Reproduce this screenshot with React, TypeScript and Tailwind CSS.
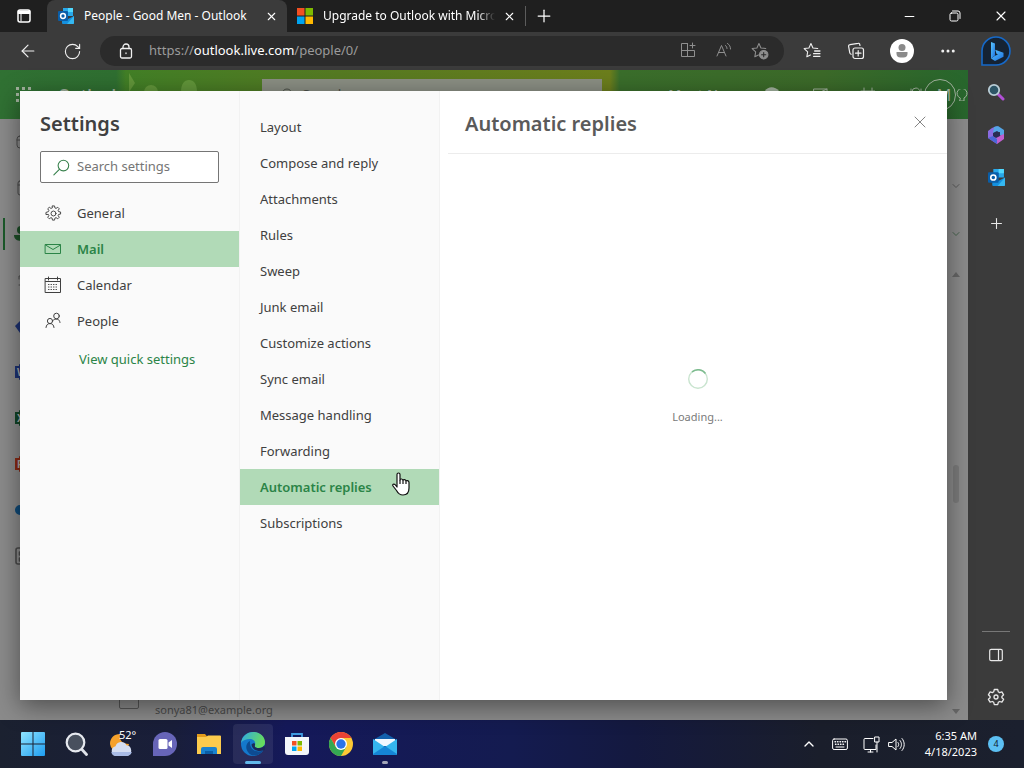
import React from 'react';
import { Plus, Minus, X, ChevronUp, ChevronDown, ArrowLeft, RotateCw, Ellipsis } from 'lucide-react';

const NAV_ITEMS = [
  { name: 'General', icon: 'gear' },
  { name: 'Mail', icon: 'mail' },
  { name: 'Calendar', icon: 'calendar' },
  { name: 'People', icon: 'people' },
];

const MAIL_SECTIONS = [
  'Layout',
  'Compose and reply',
  'Attachments',
  'Rules',
  'Sweep',
  'Junk email',
  'Customize actions',
  'Sync email',
  'Message handling',
  'Forwarding',
  'Automatic replies',
  'Subscriptions',
];

type IconProps = { size?: number; className?: string; box?: number; children?: React.ReactNode };

const Line = ({ size = 16, box = 16, className = '', children }: IconProps) => (
  <svg width={size} height={size} viewBox={`0 0 ${box} ${box}`} fill="none" stroke="currentColor" strokeWidth="1" strokeLinecap="round" strokeLinejoin="round" className={className} aria-hidden="true">
    {children}
  </svg>
);

const OutlookLogo = ({ size = 16 }: IconProps) => (
  <svg width={size} height={size} viewBox="0 0 16 16" aria-hidden="true">
    <path d="M5 0h10v8H5z" fill="#28a8ea" />
    <path d="M10 0h5v4h-5z" fill="#50d9ff" />
    <path d="M5 4h5v4H5z" fill="#0f78d4" />
    <path d="M4 8l6 3 6-3v7a1 1 0 0 1-1 1H5a1 1 0 0 1-1-1z" fill="#1490df" />
    <path d="M16 8v7a1 1 0 0 1-1 1H9z" fill="#35b8f1" />
    <rect x="0" y="3" width="10" height="10" rx="1" fill="#0a5ea8" />
    <circle cx="5" cy="8" r="2.4" fill="none" stroke="#fff" strokeWidth="1.5" />
  </svg>
);

const MicrosoftLogo = () => (
  <svg width="16" height="16" viewBox="0 0 16 16" aria-hidden="true">
    <path d="M0 0h7.5v7.5H0z" fill="#f25022" />
    <path d="M8.5 0H16v7.5H8.5z" fill="#7fba00" />
    <path d="M0 8.5h7.5V16H0z" fill="#00a4ef" />
    <path d="M8.5 8.5H16V16H8.5z" fill="#ffb900" />
  </svg>
);

const BingLogo = () => (
  <svg width="32" height="32" viewBox="0 0 32 32" aria-hidden="true">
    <defs>
      <linearGradient id="bing" x1="0" y1="0" x2="1" y2="1">
        <stop offset="0" stopColor="#5cc8ff" />
        <stop offset="1" stopColor="#1b6fe0" />
      </linearGradient>
    </defs>
    <path d="M2 30V16A14 14 0 1 1 16 30z" fill="#152334" stroke="#1669c9" strokeWidth="1.6" />
    <path d="M11 7l4 1.6v11.8l-4 3.2z" fill="url(#bing)" />
    <path d="M11 23.6l4-2.8 3-1.3-1.5-.8-1.3-4 8.3 3v4L15 26z" fill="url(#bing)" />
  </svg>
);

const GearIcon = ({ size = 18 }: IconProps) => (
  <Line size={size} box={18}>
    <circle cx="9" cy="9" r="2.6" />
    <path d="M7.9 1h2.2l.4 2.1 1.2.5 1.8-1.2 1.6 1.6-1.2 1.8.5 1.2 2.1.4v2.2l-2.1.4-.5 1.2 1.2 1.8-1.6 1.6-1.8-1.2-1.2.5-.4 2.1H7.9l-.4-2.1-1.2-.5-1.8 1.2-1.6-1.6 1.2-1.8-.5-1.2L1 10.100V7.900l2.600-.9.500-1.200L2.900 4 4.500 2.400l1.800 1.200 1.200-.5z" />
  </Line>
);

const SidebarGear = () => (
  <Line size={18} box={18}>
    <g strokeWidth="1.3">
      <circle cx="9" cy="9" r="2" />
      <path d="M7.300 1.500h3.400l.6 2.300 1.300.8 2.300-.7 1.700 2.900-1.700 1.700v1.200l1.700 1.600-1.700 2.900-2.300-.7-1.300.8-.6 2.300H7.300l-.6-2.300-1.300-.8-2.300.7-1.700-2.900 1.700-1.600V8.500L1.400 6.800l1.700-2.900 2.300.7 1.300-.8z" />
    </g>
  </Line>
);

const NavIcon = ({ icon }: { icon: string }) => {
  if (icon === 'gear') return <GearIcon size={17} />;
  if (icon === 'mail') {
    return (
      <Line size={18} box={18}>
        <path d="M1.500 4.500h15v9h-15zM1.500 5l7.500 4.500L16.500 5" />
      </Line>
    );
  }
  if (icon === 'calendar') {
    return (
      <Line size={18} box={18}>
        <path d="M1.500 2.500h15v14h-15zM1.500 5.500h15M4.500 1v3M13.500 1v3" />
        <path d="M4.500 8.500h9M4.500 11h9M4.500 13.500h9" strokeDasharray="0.5 2" />
      </Line>
    );
  }
  return (
    <Line size={18} box={18}>
      <circle cx="12.500" cy="4" r="2.800" />
      <circle cx="6" cy="9" r="2.600" />
      <path d="M2 15.500c.3-2.600 1.600-3.900 4-3.900s3.700 1.300 4 3.900M9.500 8c3.500-2 6-.8 6.500 2.500" />
    </Line>
  );
};

const Tab = ({ title, active, icon }: { title: string; active?: boolean; icon: React.ReactNode }) => (
  <div className={`flex min-w-0 items-center pr-2 ${active ? 'w-60 rounded-t-lg bg-[#3b3b3b] pl-[11px]' : 'w-[238px] pl-2.5'}`}>
    <span className="shrink-0">{icon}</span>
    <button className={`ml-2.5 min-w-0 flex-1 overflow-hidden whitespace-nowrap text-left text-[12px] text-white ${active ? '' : '[mask-image:linear-gradient(to_right,black_90%,transparent)]'}`}>
      {title}
    </button>
    <button aria-label="Close tab" className="ml-1.5 flex h-4 w-4 shrink-0 items-center justify-center text-white">
      <X size={13} strokeWidth={2} />
    </button>
  </div>
);

const TabBar = () => (
  <header className="flex h-8 shrink-0 bg-[#1f1f1f] text-white">
    <button aria-label="Tab actions" className="flex w-[47px] items-center justify-center">
      <Line size={14} box={14}>
        <rect x="1" y="1" width="12" height="12" rx="2" strokeWidth="1.5" />
        <path d="M1.500 2.500h11M1.500 4h11" strokeWidth="1.800" />
        <path d="M4 5v7" />
      </Line>
    </button>
    <Tab title="People - Good Men - Outlook" active icon={<OutlookLogo />} />
    <Tab title="Upgrade to Outlook with Microsoft 365" icon={<MicrosoftLogo />} />
    <div className="my-1.5 w-px bg-[#5c5c5c]" />
    <button aria-label="New tab" className="flex w-9 items-center justify-center">
      <Plus size={20} strokeWidth={1.5} />
    </button>
    <div className="ml-auto flex">
      <button aria-label="Minimize" className="flex w-[46px] items-center justify-center"><Minus size={15} strokeWidth={1.6} /></button>
      <button aria-label="Restore" className="flex w-[46px] items-center justify-center">
        <Line size={12} box={12}>
          <rect x="1" y="3" width="8" height="8" rx="1.500" />
          <path d="M3.500 1H9a2 2 0 0 1 2 2v5.500" />
        </Line>
      </button>
      <button aria-label="Close" className="flex w-[46px] items-center justify-center"><X size={16} strokeWidth={1.7} /></button>
    </div>
  </header>
);

const Star = () => <path d="M7.500 1.500l1.900 4.100 4.500.6M7.500 1.500L5.600 5.600l-4.500.6 3.300 3.200-.8 4.600L7 12.200" />;

const Toolbar = () => (
  <div className="flex h-[38px] shrink-0 items-center bg-[#3b3b3b] pl-1.5 pr-0.5 text-[#f0f0f0]">
    <button aria-label="Back" className="flex w-11 justify-center"><ArrowLeft size={20} strokeWidth={1.400} /></button>
    <button aria-label="Reload" className="flex w-11 justify-center"><RotateCw size={19} strokeWidth={1.400} /></button>
    <div className="ml-1.5 flex h-[30px] min-w-0 flex-1 items-center rounded-full bg-[#2b2b2b] pl-[18px] pr-1.5">
      <Line size={16} box={16}>
        <g strokeWidth="1.300">
          <rect x="2.500" y="5.500" width="11" height="9.500" rx="1.500" />
          <path d="M5 5.500V4a3 3 0 0 1 6 0v1.500M8 10v.5" />
        </g>
      </Line>
      <div role="textbox" aria-label="Address" tabIndex={0} className="ml-[15px] flex-1 whitespace-nowrap text-[13px] text-[#9b9b9b]">
        https://<span className="text-white">outlook.live.com</span>/people/0/
      </div>
      <div className="flex text-[#8f8f8f]">
        <button aria-label="Apps" className="flex w-9 justify-center">
          <Line size={16} box={16}><path d="M7.500 1.500h-6v13h13v-6h-13M7.500 1.500v13M8 8.500h3M12.500 1v5M10 3.500h5" /></Line>
        </button>
        <button aria-label="Read aloud" className="flex w-9 justify-center">
          <Line size={16} box={16}><path d="M1 14L5.500 3.500 10 14M2.700 10.500h5.600M9.500 3.500c1 .8 1.500 2 1.500 3M11.500 1.500c2 1.300 3 3 3 5.500" /></Line>
        </button>
        <button aria-label="Add to favorites" className="flex w-9 justify-center">
          <Line size={18} box={17}>
            <Star />
            <circle cx="12" cy="12" r="4" fill="currentColor" />
            <path d="M12 10v4M10 12h4" stroke="#2b2b2b" />
          </Line>
        </button>
      </div>
    </div>
    <button aria-label="Favorites" className="ml-1.5 flex w-11 justify-center">
      <Line size={18} box={17}><Star /><path d="M11 8.500h5M10 11h6M10 13.500h6" strokeWidth="1.200" /></Line>
    </button>
    <button aria-label="Collections" className="flex w-11 justify-center">
      <Line size={18} box={18}>
        <g strokeWidth="1.200">
          <rect x="6" y="6" width="10.500" height="10.500" rx="2" />
          <path d="M11.200 8.500v5.500M8.500 11.200H14M13 3.500l-.3-1.200a1.500 1.500 0 0 0-1.700-1L3 2.600A1.500 1.500 0 0 0 1.600 4.300l1.200 6.500c.2.700.7 1.200 1.300 1.500" />
        </g>
      </Line>
    </button>
    <button aria-label="Profile" className="flex w-12 justify-center">
      <svg width="24" height="24" viewBox="0 0 24 24" aria-hidden="true">
        <circle cx="12" cy="12" r="12" fill="#fff" />
        <circle cx="12" cy="8.500" r="3.500" fill="#8a8a8a" />
        <path d="M6.500 13h11v1.500a4 4 0 0 1-4 4h-3a4 4 0 0 1-4-4z" fill="#8a8a8a" />
      </svg>
    </button>
    <button aria-label="More" className="flex w-11 justify-center"><Ellipsis size={18} /></button>
    <button aria-label="Bing" className="flex w-[52px] justify-center"><BingLogo /></button>
  </div>
);

const AppBadge = ({ color, letter }: { color: string; letter: string }) => (
  <svg width="18" height="18" viewBox="0 0 18 18" aria-hidden="true">
    <rect x="4" y="1" width="14" height="16" rx="1" fill={color} />
    <rect x="0" y="3" width="12" height="12" fill={color} />
    <text x="2" y="13" fontSize="10" fontWeight="700" fill="#aaa">{letter}</text>
  </svg>
);

const RAIL = [
  <Line key="mail" size={18} box={18}><rect x="2" y="3" width="15" height="12" rx="3" /><path d="M2 7h15" /></Line>,
  <Line key="cal" size={18} box={18}><rect x="3" y="2" width="14" height="14" rx="2" /><path d="M3 6h14" /></Line>,
  <svg key="people" width="20" height="18" viewBox="0 0 20 18" fill="#1c4f27"><circle cx="7" cy="5" r="4" /><path d="M0 10h18c0 5-4 6-9 6s-9-1-9-6z" /></svg>,
  <Line key="files" size={14} box={14}><path d="M4 6V3h10v9H4" /></Line>,
  <svg key="todo" width="20" height="16" viewBox="0 0 20 16" fill="#1d3273"><path d="M0 8l5-5 15 8-6 5-9-1z" /></svg>,
  <AppBadge key="word" color="#1d3273" letter="W" />,
  <AppBadge key="excel" color="#124527" letter="X" />,
  <AppBadge key="ppt" color="#8a2a14" letter="P" />,
  <svg key="drive" width="20" height="14" viewBox="0 0 20 14" fill="#0f4a78"><path d="M5 12a5 5 0 0 1 0-10c6-3 10 0 13 5v5z" /></svg>,
  <Line key="apps" size={18} box={18}><g strokeWidth="1.600"><rect x="1" y="1" width="16" height="16" rx="2" /><path d="M4.500 5v3M4.500 11v3" /></g></Line>,
];

const OutlookPage = () => (
  <div className="flex h-full flex-col" aria-hidden="true">
    <div className="flex h-[49px] shrink-0 items-center justify-between bg-[linear-gradient(to_right,#307133_0,#2f6f31_12%,#427f26_13%,#557a22_35%,#6c7e1c_63%,#3a6e2b_64%,#3c6a29_85%,#28672d_100%)] pl-4 text-[#a3b39f]">
      <svg width="16" height="16" viewBox="0 0 16 16" fill="currentColor">
        <path d="M0 0h3v3H0zM6 0h3v3H6zM12 0h3v3h-3zM0 6h3v3H0zM0 12h3v3H0z" />
      </svg>
      <span className="ml-[26px] text-[16px] font-semibold">Outlook</span>
      <svg width="100" height="49" viewBox="0 0 100 49" fill="#62963a" className="mr-auto ml-2">
        <path d="M0 3l6 10-6 9z" />
        <circle cx="22" cy="22" r="7" />
        <path d="M52 22c0-8 3-12 8-12s8 4 8 12z" />
      </svg>
      <div className="flex h-8 w-[340px] shrink-0 items-center gap-2 bg-[#8b8f84] px-4 text-[14px] text-[#4b5048]">
        <Line><circle cx="9" cy="7" r="5" /><path d="M5.500 10.500L1 15" /></Line>
        Search
      </div>
      <span className="ml-[66px] whitespace-nowrap text-[14px] font-semibold">Meet Now</span>
      <div className="ml-[26px] flex w-40 items-center justify-between">
        <svg width="16" height="16" viewBox="0 0 16 16" fill="currentColor"><path d="M1 4c3-5 10-5 14 0v4H1z" /></svg>
        <Line><path d="M2 2h13v12H2zM2 8l13-6" /></Line>
        <Line><path d="M1 4h14v11H1zM4 1v4M12 1v4" /></Line>
        <Line><circle cx="8" cy="5" r="4" /><path d="M3 2v5M13 2v5" /></Line>
      </div>
      <span className="flex h-8 w-8 shrink-0 items-center justify-center rounded-full border border-current pl-2 text-[16px]">M</span>
      <Line size={12} box={12}><path d="M4 9a5 5 0 1 1 4 0v3H4z" /></Line>
    </div>
    <div className="flex min-h-0 flex-1 bg-[#8b8b8b] text-[#4a4a4a]">
      <div className="w-12 shrink-0">
        {RAIL.map((item, i) => (
          <div key={i} className={`flex h-[46px] items-center ${i === 2 ? 'pl-[11px]' : 'pl-[15px]'}`}>
            {i === 2 && <span className="-ml-2 mr-[9px] h-8 w-0.5 bg-[#1c5a2a]" />}
            {item}
          </div>
        ))}
      </div>
      <div className="flex flex-1 items-end gap-4 pl-[71px]">
        <span className="mb-[11px] h-5 w-5 rounded-xs border border-[#555]" />
        <span className="pb-0.5 text-[11px] leading-4">sonya81@example.org</span>
      </div>
      <div className="flex w-6 flex-col items-center pt-[61px]">
        <ChevronDown size={12} strokeWidth={1.500} />
        <ChevronDown size={12} strokeWidth={1.500} className="mt-9 text-[#32563a]" />
        <svg width="8" height="5" viewBox="0 0 8 5" className="mt-8" fill="#666"><path d="M4 0l4 5H0z" /></svg>
        <span className="mt-auto h-[38px] w-1.5 rounded-full bg-[#7b7b7b]" />
        <svg width="8" height="5" viewBox="0 0 8 5" className="mb-1.5 mt-[206px]" fill="#666"><path d="M4 5l4-5H0z" /></svg>
      </div>
    </div>
  </div>
);

const HandCursor = () => (
  <svg width="18" height="24" viewBox="0 0 18 24" className="absolute left-[152px] top-[3px]" aria-hidden="true">
    <path d="M5 15V2.500a1.500 1.500 0 0 1 3 0V8c0-1.500 3-1.300 3 .5 0-1.300 3-1.200 3 .8 0-1.200 3-.9 3 1.200V16c0 4-2 7-6 7-3.500 0-5-1.600-6.500-4.500L1 14c-.8-1.500.8-2.600 2-1.500z" fill="#fff" stroke="#111" strokeWidth="1.200" strokeLinejoin="round" />
    <path d="M8 8v4M11 8.500V12M14 9.500V12" stroke="#111" strokeWidth="1.200" />
  </svg>
);

const SettingsDialog = () => (
  <div role="dialog" aria-label="Settings" className="flex h-full bg-white text-[13px] text-[#404040] shadow-[0_6px_24px_rgba(0,0,0,0.45)]">
    <nav className="flex w-[220px] shrink-0 flex-col border-r border-[#f2f2f2] bg-[#fafafa]">
      <h1 className="px-5 pt-[19px] text-[20px] font-semibold leading-7">Settings</h1>
      <div className="mx-5 mt-[13px] flex h-8 items-center rounded-xs border border-[#757575] bg-white pl-3">
        <label htmlFor="search" aria-label="Search settings" className="text-[#36804b]">
          <Line size={17} box={16}><circle cx="9.800" cy="6.200" r="5" /><path d="M6 9.800L.8 15" /></Line>
        </label>
        <input id="search" type="text" placeholder="Search settings" className="ml-[7px] w-32 bg-transparent outline-none placeholder:text-[#757575]" />
      </div>
      <ul className="mt-3">
        {NAV_ITEMS.map((item) => (
          <li key={item.name}>
            <button className={`flex h-9 w-full items-center gap-[15px] pl-6 text-left ${item.name === 'Mail' ? 'bg-[#b1dab7] font-semibold text-[#2b8447]' : ''}`}>
              <span className="flex w-[18px] justify-center"><NavIcon icon={item.icon} /></span>
              <span className="pt-0.5">{item.name}</span>
            </button>
          </li>
        ))}
      </ul>
      <a href="#quick" className="ml-[59px] mt-[11px] text-[#2b8447]">View quick settings</a>
    </nav>

    <ul className="w-[200px] shrink-0 border-r border-[#f2f2f2] bg-[#fafafa] pt-[18px]">
      {MAIL_SECTIONS.map((name) => (
        <li key={name} className="relative">
          <button className={`h-9 w-full pl-5 pt-0.5 text-left ${name === 'Automatic replies' ? 'bg-[#b1dab7] font-semibold text-[#2b8447]' : ''}`}>
            {name}
          </button>
          {name === 'Automatic replies' && <HandCursor />}
        </li>
      ))}
    </ul>

    <section className="ml-2 flex min-w-0 flex-1 flex-col">
      <div className="flex h-[63px] items-center justify-between border-b border-[#ececec] pl-[17px] pr-[17px]">
        <h2 className="pt-[3px] text-[20px] font-semibold leading-7 text-[#5a5a5a]">Automatic replies</h2>
        <button aria-label="Close settings" className="text-[#6b6b6b]"><X size={20} strokeWidth={1} /></button>
      </div>
      <div className="flex flex-1 flex-col items-center justify-center gap-5 pb-[60px]">
        <svg width="20" height="20" viewBox="0 0 20 20" fill="none" aria-hidden="true">
          <circle cx="10" cy="10" r="9.300" stroke="#c9e4cf" strokeWidth="1.400" />
          <path d="M4 2.900A9.300 9.300 0 0 1 17.500 4.500" stroke="#7dbb8f" strokeWidth="1.400" />
        </svg>
        <span className="text-[11px] leading-4 text-[#7a7a7a]">Loading...</span>
      </div>
    </section>
  </div>
);

const EdgeSidebar = () => (
  <aside className="flex w-14 shrink-0 flex-col items-center bg-[#3b3b3b] text-[#e8e8e8]">
    <button aria-label="Search" className="flex h-[43px] items-center">
      <svg width="18" height="18" viewBox="0 0 18 18" fill="none">
        <path d="M11 11l5 5" stroke="#b14fd6" strokeWidth="3" strokeLinecap="round" />
        <circle cx="7" cy="7" r="5.200" fill="#2d5566" stroke="#b9cdd6" strokeWidth="1.800" />
      </svg>
    </button>
    <button aria-label="Microsoft 365" className="flex h-[43px] items-center">
      <svg width="18" height="18" viewBox="0 0 18 18">
        <path d="M5 2l5-2-3 7v5L1 12V5z" fill="#8a6be0" />
        <path d="M7 1l4-1 6 4v8l-4-3V6L6 7z" fill="#53a5e6" />
        <path d="M1 12l6-1 5-1 5-2v5l-7 5z" fill="#c05fd0" />
        <path d="M1 12l5-2 4 3v5z" fill="#4968d8" />
        <path d="M6 7l4-2 3 2v3l-4 2-3-2z" fill="#292d55" />
      </svg>
    </button>
    <button aria-label="Outlook" className="flex h-[43px] items-center"><OutlookLogo size={17} /></button>
    <button aria-label="Customize" className="flex h-12 items-center"><Plus size={17} strokeWidth={1.500} /></button>
    <div className="mb-0.5 mt-auto h-px w-7 bg-[#777]" />
    <button aria-label="Hide sidebar" className="flex h-[42px] items-center">
      <Line size={14} box={14}><g strokeWidth="1.200"><rect x="0.700" y="1.300" width="12.600" height="11.400" rx="1.500" /><path d="M9.500 1.500v11" /></g></Line>
    </button>
    <button aria-label="Sidebar settings" className="mb-0.5 flex h-[42px] items-center"><SidebarGear /></button>
  </aside>
);

const TASKS = [
  {
    name: 'Start',
    icon: (
      <svg width="24" height="24" viewBox="0 0 24 24">
        <defs><linearGradient id="win" x1="0" y1="0" x2="1" y2="1"><stop offset="0" stopColor="#8fe4ff" /><stop offset="1" stopColor="#1e9df0" /></linearGradient></defs>
        <path d="M1 0h10.500v11.500H0V1a1 1 0 0 1 1-1zM12.500 0H23a1 1 0 0 1 1 1v10.500H12.500zM0 12.500h11.500V24H1a1 1 0 0 1-1-1zM12.500 12.500H24V23a1 1 0 0 1-1 1H12.500z" fill="url(#win)" />
      </svg>
    ),
  },
  {
    name: 'Search',
    icon: (
      <svg width="24" height="24" viewBox="0 0 24 24" fill="none">
        <path d="M16.500 17l5 5.500" stroke="#dfe3ea" strokeWidth="2.800" strokeLinecap="round" />
        <circle cx="10.500" cy="10.500" r="8.800" fill="#48505e" stroke="#e6e9ef" strokeWidth="2.200" />
      </svg>
    ),
  },
  {
    name: 'Weather',
    icon: (
      <svg width="24" height="28" viewBox="0 0 24 28">
        <path d="M11 4c-1 6 2 10 9 10-1 5-5 8-10 8A9 9 0 0 1 1 14C1 8 5 4 11 4z" fill="#f5a12c" />
        <path d="M7 26a5 5 0 0 1-.5-9.800 6 6 0 0 1 11-1A5.500 5.500 0 0 1 18 26z" fill="#d5def2" />
        <path d="M7 26a5 5 0 0 1-4.700-4h20.500A5.500 5.500 0 0 1 18 26z" fill="#a9bbe6" />
      </svg>
    ),
  },
  {
    name: 'Chat',
    icon: (
      <svg width="24" height="24" viewBox="0 0 24 24">
        <path d="M0 24V12A12 12 0 1 1 12 24z" fill="#6765b8" />
        <rect x="5.500" y="7" width="9" height="10" rx="1.500" fill="#fff" />
        <path d="M15.500 10.500L19 8v8l-3.500-2.500z" fill="#fff" />
      </svg>
    ),
  },
  {
    name: 'File Explorer',
    icon: (
      <svg width="24" height="24" viewBox="0 0 24 24">
        <path d="M0 2h8l2.500 3H0z" fill="#e39b1b" />
        <path d="M0 5h9l2-1.500h12a1 1 0 0 1 1 1V22H0z" fill="#fccb4d" />
        <path d="M4 22v-5a2 2 0 0 1 2-2h12a2 2 0 0 1 2 2v5z" fill="#1a82cf" />
        <path d="M8 22v-3h8v3z" fill="#0b5ea6" />
      </svg>
    ),
  },
  {
    name: 'Edge',
    icon: (
      <svg width="24" height="24" viewBox="0 0 24 24">
        <defs>
          <linearGradient id="edge-top" x1="0" y1="0" x2="1" y2="0.300"><stop offset="0" stopColor="#2fa8e8" /><stop offset="1" stopColor="#66dc5e" /></linearGradient>
        </defs>
        <circle cx="12" cy="12" r="12" fill="#1478cc" />
        <path d="M0 11C1 4 6 0 12 0c7 0 12 5 12 10 0 4-3 6-6 6-3 0-5-1-4-3 1-4-2-6-5-6-4 0-7 1-9 4z" fill="url(#edge-top)" />
        <path d="M9 9c-4 2-5 7-2 11 2 3 5 4 8 3.500 3-.5 6-3 7-5-7 3-14-1-13-9.500z" fill="#0d4b92" />
        <path d="M14 13c-1 2 1 3 4 3 2 0 4.500-1 5.500-3 1 4 1 5-1 5.500C17 20 11 18 10.500 12.500c2-2 4-1.500 3.500.5z" fill="#1b2a58" />
      </svg>
    ),
  },
  {
    name: 'Store',
    icon: (
      <svg width="24" height="24" viewBox="0 0 24 24">
        <path d="M7 6V2h10v4" fill="none" stroke="#3f9be0" strokeWidth="1.800" />
        <path d="M0 5h24v15a3 3 0 0 1-3 3H3a3 3 0 0 1-3-3z" fill="#f3f6fa" />
        <path d="M7 9h4.500v4.500H7z" fill="#f25022" /><path d="M12.500 9H17v4.500h-4.500z" fill="#7fba00" />
        <path d="M7 14.500h4.500V19H7z" fill="#00a4ef" /><path d="M12.500 14.500H17V19h-4.500z" fill="#ffb900" />
      </svg>
    ),
  },
  {
    name: 'Chrome',
    icon: (
      <svg width="24" height="24" viewBox="0 0 24 24">
        <circle cx="12" cy="12" r="12" fill="#fcc934" />
        <path d="M1.600 6A12 12 0 0 1 22.400 6H12L6.800 15z" fill="#ea4335" />
        <path d="M1.600 6A12 12 0 0 0 12 24l5.200-9-10.400 0z" fill="#34a853" />
        <circle cx="12" cy="12" r="6" fill="#fff" /><circle cx="12" cy="12" r="4.700" fill="#2b73e8" />
      </svg>
    ),
  },
  {
    name: 'Mail',
    icon: (
      <svg width="24" height="24" viewBox="0 0 24 24">
        <path d="M0 8l12-7 12 7v4H0z" fill="#1260ac" />
        <path d="M2 7h20v7H2z" fill="#f1f8ff" />
        <path d="M0 7l12 8 12-8v15a1 1 0 0 1-1 1H1a1 1 0 0 1-1-1z" fill="#35b5ee" />
        <path d="M0 22L12 14l12 8a1 1 0 0 1-1 1H1z" fill="#1585d6" />
      </svg>
    ),
  },
];

const Taskbar = () => (
  <footer className="flex h-12 shrink-0 items-center justify-between bg-[linear-gradient(to_right,#1b2130_0,#191e3a_17%,#15195a_28%,#141b50_50%,#14193f_62%,#1a1e2b_80%,#1b202e_100%)] pl-[11px] text-white">
    <div className="flex">
      {TASKS.map(({ name, icon }) => (
        <div key={name} className="relative flex w-11 justify-center">
          <button aria-label={name} className={`flex h-10 w-10 items-center justify-center rounded ${name === 'Edge' ? 'bg-white/8' : ''}`}>{icon}</button>
          {name === 'Weather' && <span className="absolute left-5 top-[3px] text-[11px] leading-4">52°</span>}
          {name === 'Edge' && <span className="absolute bottom-0 left-3.5 h-[3px] w-4 rounded-full bg-[#62b8ea]" />}
          {name === 'Mail' && <span className="absolute bottom-0 left-[19px] h-[3px] w-1.5 rounded-full bg-[#a3a6b8]" />}
        </div>
      ))}
    </div>
    <div className="flex items-center pr-5">
      <button aria-label="Show hidden icons" className="mr-[15px]"><ChevronUp size={16} strokeWidth={2} /></button>
      <button aria-label="Touch keyboard" className="mr-[15px]">
        <Line size={16} box={16}>
          <rect x="0.600" y="3" width="14.800" height="10.500" rx="1.500" />
          <path d="M3 5.700h10.500M3.500 8.200h10" strokeDasharray="0.500 2" strokeWidth="1.400" />
          <path d="M4 11h8" />
        </Line>
      </button>
      <button aria-label="Network" className="mr-2">
        <Line size={17} box={17}>
          <path d="M10 2.500H2a1 1 0 0 0-1 1v9a1 1 0 0 0 1 1h11V9M5 16h5M7.500 13.500V16" />
          <rect x="12" y="1" width="4" height="5" /><path d="M14 6v10" />
        </Line>
      </button>
      <button aria-label="Volume">
        <Line size={17} box={17}><path d="M1 6.500h3L8 3v11l-4-3.500H1zM10 6.500c1 1.200 1 2.800 0 4M12 4.500c2 2.300 2 5.700 0 8M14 2.500c3 3.500 3 8.500 0 12" /></Line>
      </button>
      <div className="ml-3 w-[60px] whitespace-nowrap text-right text-[11px] leading-4">
        <div>6:35 AM</div>
        <div>4/18/2023</div>
      </div>
      <span className="ml-[11px] flex h-4 w-4 items-center justify-center rounded-full bg-[#5cc0f3] text-[9px] text-[#102030]">4</span>
    </div>
  </footer>
);

const App: React.FC = () => (
  <div className="flex h-screen flex-col overflow-hidden font-['Noto_Sans','Open_Sans',sans-serif]">
    <TabBar />
    <Toolbar />
    <div className="flex min-h-0 flex-1">
      <main className="relative min-w-0 flex-1">
        <OutlookPage />
        <div className="absolute inset-0 pb-5 pl-5 pr-[21px] pt-[21px]">
          <SettingsDialog />
        </div>
      </main>
      <EdgeSidebar />
    </div>
    <Taskbar />
  </div>
);

export default App;
